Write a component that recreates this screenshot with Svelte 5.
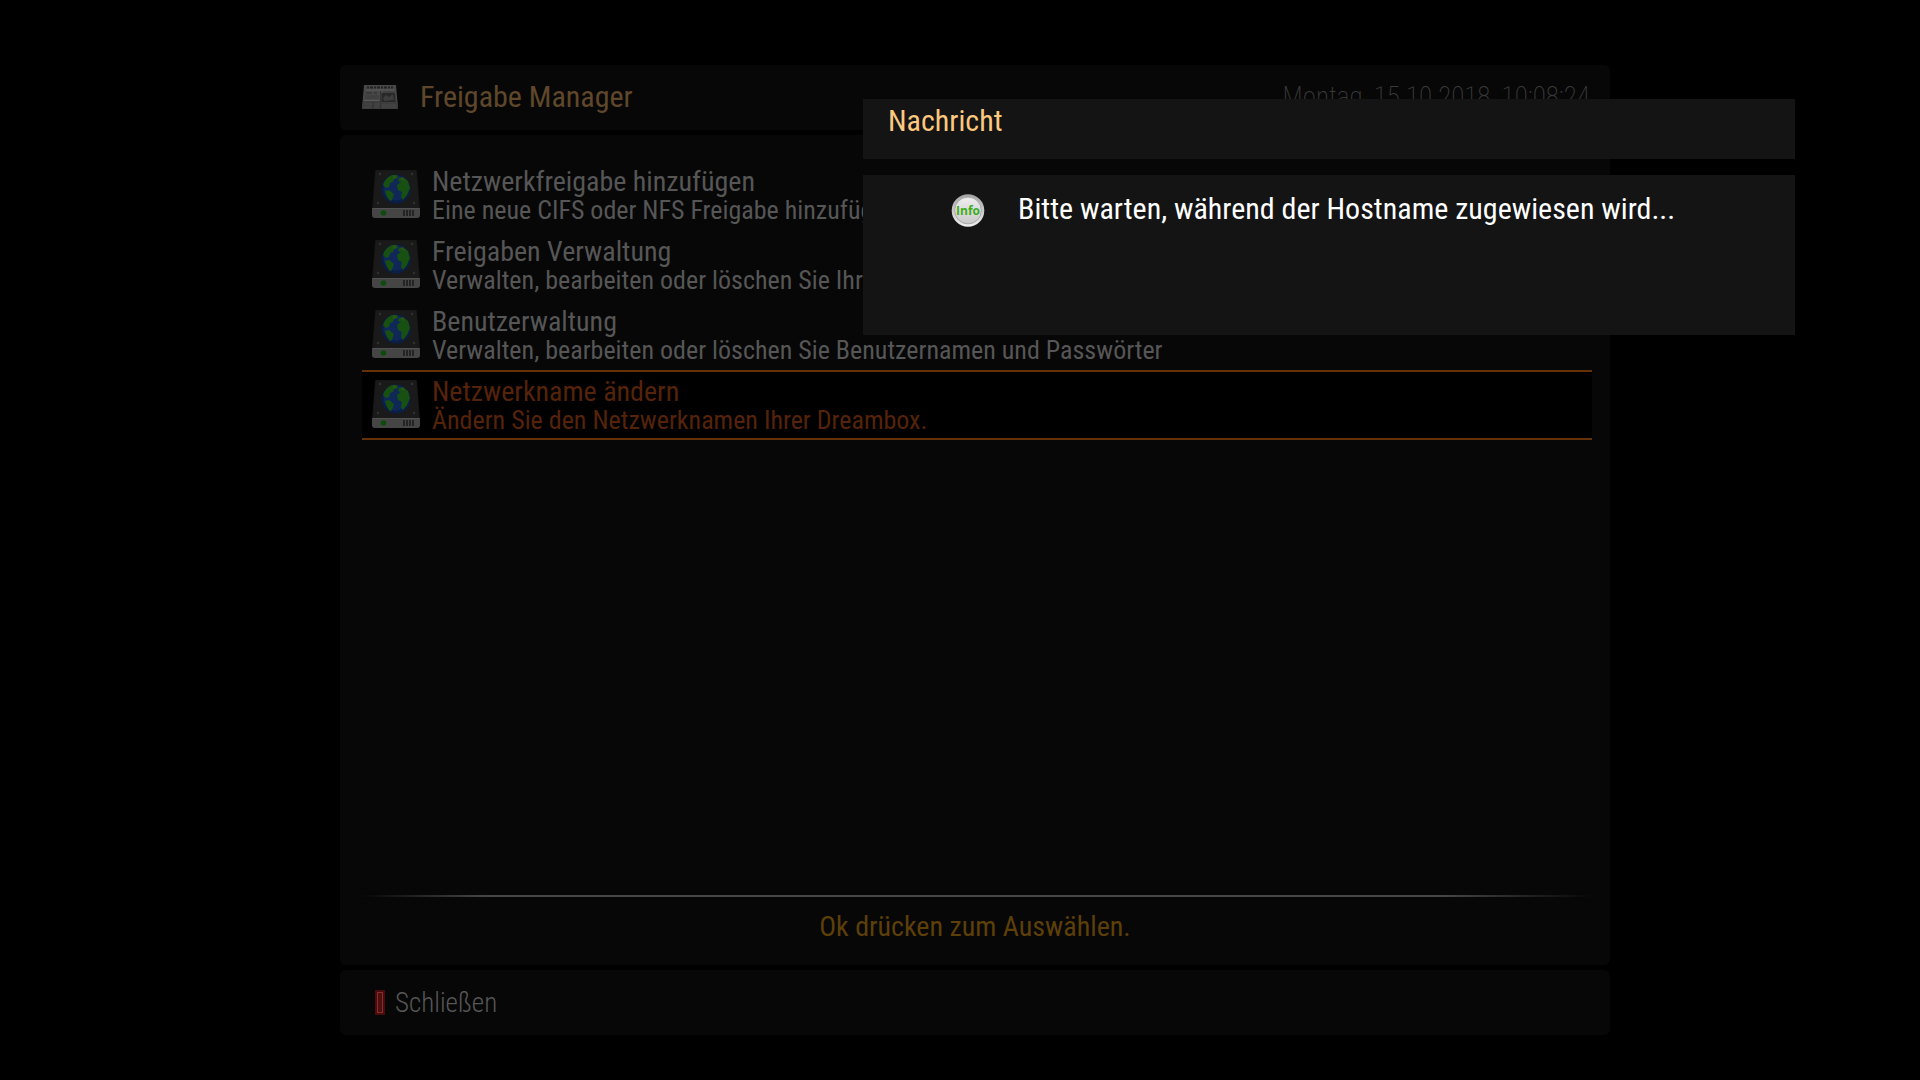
<script>
  const entries = [
    { title: "Netzwerkfreigabe hinzufügen", info: "Eine neue CIFS oder NFS Freigabe hinzufügen" },
    { title: "Freigaben Verwaltung", info: "Verwalten, bearbeiten oder löschen Sie Ihre Freigaben" },
    { title: "Benutzerwaltung", info: "Verwalten, bearbeiten oder löschen Sie Benutzernamen und Passwörter" },
    { title: "Netzwerkname ändern", info: "Ändern Sie den Netzwerknamen Ihrer Dreambox." }
  ];

  let selected = 3;
</script>

<div class="screen">
  <header class="panel header">
    <svg class="news-icon" width="36" height="24" viewBox="0 0 36 24">
      <path d="M2 0H34L36 24H0Z" fill="#484848" />
      <path d="M0.6 16H35.4L36 24H0Z" fill="#3d3d3d" />
      <path d="M5 2.5H31" stroke="#222" stroke-width="2" stroke-dasharray="2 1 3 1" />
      <path d="M4 5H32" stroke="#5a5a5a" />
      <path d="M4 8H10M12 8H15" stroke="#2b2b2b" />
      <path d="M3 11H17M3 13H17M21 7H32" stroke="#383838" />
      <path d="M2 15.5H17" stroke="#5a5a5a" />
      <path d="M19.5 8H33L33.5 17H19.5Z" fill="#282828" />
      <path d="M21 13L24 10L27 12L31 9L32 15L22 16Z" fill="#3d3d3d" />
      <path d="M2 19H10M12 19H18M2 22H9M12 22H17M20 20H34M20 22H34" stroke="#484848" />
      <path d="M11 17V24M18.5 6V24" stroke="#333" />
    </svg>
    <h1>Freigabe Manager</h1>
    <time datetime="2018-10-15T10:08:24">Montag, 15.10.2018, 10:08:24</time>
  </header>

  <main class="panel content">
    <ul class="entries">
      {#each entries as entry, i}
        <li>
          <button class="entry" class:selected={selected === i} on:click={() => (selected = i)}>
            <svg width="48" height="48" viewBox="0 0 48 48">
              <path d="M4 0H44Q45 0 45 2L48 40H0L3 2Q3 0 4 0Z" fill="#171717" />
              <path d="M4 1H44L47 38H1Z" fill="#1a1a1b" />
              <g fill="#303030">
                <circle cx="8" cy="4" r="1.3" />
                <circle cx="40" cy="4" r="1.3" />
                <circle cx="6" cy="33" r="1.3" />
                <circle cx="42" cy="33" r="1.3" />
              </g>
              <circle cx="24" cy="19" r="14.5" fill="#0b1e48" />
              <circle cx="24" cy="18" r="12.5" fill="#102858" />
              <path d="M11 15Q13 8 20 5L25 5L26 8L22 9L21 12L18 13L17 17L14 18Z" fill="#185011" />
              <path d="M13 21L17 20L22 24L20 30L18 31L15 27Z" fill="#185011" />
              <path d="M27 8L31 7L36 11L38 18L35 25L31 30L29 27L30 22L26 20L25 15L29 12L26 11Z" fill="#185011" />
              <path d="M21 6L23 5L24 8L21 9ZM28 8L31 8L33 11L30 10Z" fill="#2a5519" />
              <path d="M0 38H48V45Q48 48 45 48H3Q0 48 0 45Z" fill="#454545" />
              <path d="M1 38.5H47" stroke="#525252" />
              <circle cx="11.5" cy="43" r="2.8" fill="#0d4b0d" />
              <path d="M32 40V46M35 40V46M38 40V46M41 40V46" stroke="#171717" stroke-width="1.4" />
            </svg>
            <span class="entry-text">
              <span class="entry-title">{entry.title}</span>
              <span class="entry-info">{entry.info}</span>
            </span>
          </button>
        </li>
      {/each}
    </ul>
    <div class="divider"></div>
    <p class="hint">Ok drücken zum Auswählen.</p>
  </main>

  <footer class="panel footer">
    <button class="close">
      <span class="red-key"></span>
      Schließen
    </button>
  </footer>

  <div class="dialog" role="dialog" aria-labelledby="dialog-title">
    <h2 id="dialog-title">Nachricht</h2>
    <div class="message">
      <svg width="34" height="34" viewBox="0 0 34 34">
        <defs>
          <linearGradient id="rim" x1="0" y1="0" x2="0" y2="1">
            <stop offset="0" stop-color="#a2a2a2" />
            <stop offset="1" stop-color="#f0f0f0" />
          </linearGradient>
          <linearGradient id="face" x1="0" y1="0" x2="0" y2="1">
            <stop offset="0" stop-color="#eeeeee" />
            <stop offset="1" stop-color="#c9c9c9" />
          </linearGradient>
        </defs>
        <circle cx="17" cy="17.5" r="16.3" fill="url(#rim)" />
        <circle cx="17" cy="17.5" r="13.4" fill="url(#face)" stroke="#a9a9a9" />
        <text x="17" y="22" text-anchor="middle">Info</text>
      </svg>
      <p>Bitte warten, während der Hostname zugewiesen wird...</p>
    </div>
  </div>
</div>

<style>
  :global(body) {
    margin: 0;
    background: #000;
  }

  .screen {
    position: relative;
    box-sizing: border-box;
    min-height: 100vh;
    padding: 65px 310px 45px 340px;
    display: flex;
    flex-direction: column;
    gap: 5px;
    font-family: "Roboto Condensed", "Liberation Sans Narrow", Roboto, sans-serif;
    font-size: 28px;
    line-height: 32px;
    color: #565656;
  }

  h1,
  h2,
  p,
  ul {
    margin: 0;
    padding: 0;
    font-weight: 400;
  }

  button {
    border: none;
    background: none;
    padding: 0;
    font: inherit;
    color: inherit;
    text-align: left;
    cursor: pointer;
  }

  .panel {
    box-sizing: border-box;
    background: #070707;
    border-radius: 6px;
  }

  .header {
    height: 65px;
    padding: 0 20px 2px 22px;
    display: flex;
    align-items: center;
    white-space: nowrap;
  }

  .header h1 {
    margin-left: 22px;
    font-size: 30px;
    color: #5f472b;
  }

  .header time {
    margin-left: auto;
    font-size: 27px;
    font-weight: 200;
    color: #3a3a3a;
  }

  .content {
    flex: 1;
    display: flex;
    flex-direction: column;
    padding: 25px 18px 0 22px;
  }

  .entries {
    flex: 1;
    list-style: none;
  }

  .entry {
    box-sizing: border-box;
    width: 100%;
    height: 70px;
    padding: 8px 10px 0;
    display: flex;
    align-items: flex-start;
    gap: 12px;
    border-top: 2px solid transparent;
    border-bottom: 2px solid transparent;
    white-space: nowrap;
  }

  .entry.selected {
    background: #000;
    border-color: #653108;
    color: #55230a;
  }

  .entry svg {
    flex: none;
  }

  .entry-text {
    display: flex;
    flex-direction: column;
    margin-top: -4px;
  }

  .entry-title {
    line-height: 32px;
  }

  .entry-info {
    font-size: 26px;
    line-height: 24px;
  }

  .divider {
    height: 2px;
    background: linear-gradient(to right, transparent, #464646 10%, #464646 88%, transparent);
  }

  .hint {
    padding: 14px 4px 22px 0;
    text-align: center;
    color: #5d3f08;
  }

  .footer {
    height: 65px;
    padding: 0 35px;
    display: flex;
    align-items: center;
  }

  .close {
    display: flex;
    align-items: center;
    gap: 10px;
    font-size: 27px;
    font-weight: 300;
  }

  .red-key {
    box-sizing: border-box;
    width: 10px;
    height: 25px;
    background: #4c1010;
    border: 2px solid #4a0b0b;
    box-shadow: inset 0 0 0 1px #8a2c2c;
  }

  .dialog {
    position: absolute;
    top: 99px;
    left: 863px;
    right: 125px;
    font-size: 30px;
    color: #fff;
  }

  .dialog h2 {
    padding: 6px 25px 22px;
    font-size: 30px;
    background: #141414;
    color: #fbc87f;
  }

  .message {
    box-sizing: border-box;
    min-height: 160px;
    margin-top: 16px;
    padding: 18px 88px;
    display: flex;
    align-items: flex-start;
    gap: 33px;
    background: #141414;
  }

  .message svg {
    flex: none;
  }

  .message text {
    font: bold 12px "Open Sans", sans-serif;
    fill: #3cac1c;
  }
</style>
